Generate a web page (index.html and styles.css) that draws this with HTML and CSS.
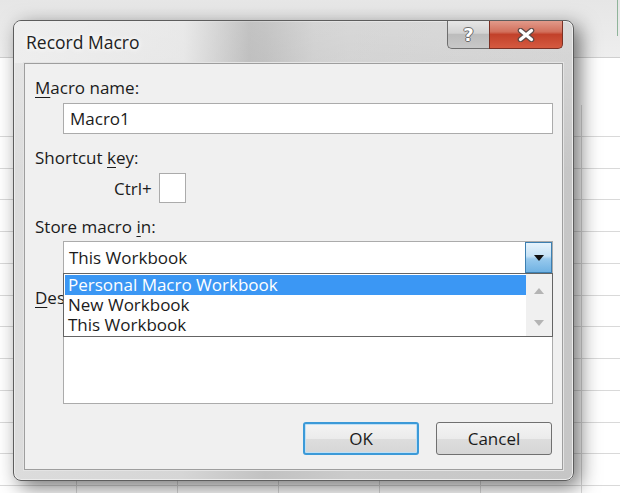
FILE: index.html
```html
<!DOCTYPE html>
<html lang="en">
<head>
  <meta charset="UTF-8" />
  <title>Record Macro</title>
  <link rel="stylesheet" href="styles.css">
</head>
<body>

  <!-- Record Macro dialog over the sheet -->
  <div class="window">
    <div class="titlebar">
      <span class="title">Record Macro</span>
      <div class="caption-buttons">
        <div class="cap help">?</div>
        <div class="cap close">
          <svg width="18" height="14" viewBox="0 0 18 14">
            <path d="M3.5 2.5 L14.5 11.5 M14.5 2.5 L3.5 11.5" stroke="#5e4a47" stroke-width="5.6" stroke-linecap="round" />
            <path d="M3.5 2.5 L14.5 11.5 M14.5 2.5 L3.5 11.5" stroke="#ffffff" stroke-width="3.2" stroke-linecap="round" />
          </svg>
        </div>
      </div>
    </div>

    <div class="client">
      <div class="label"><u>M</u>acro name:</div>
      <div class="field textbox">Macro1</div>

      <div class="label">Shortcut <u>k</u>ey:</div>
      <div class="shortcut-row">
        <span>Ctrl+</span>
        <div class="field keybox"></div>
      </div>

      <div class="label">Store macro <u>i</u>n:</div>
      <div class="combo-wrap">
        <div class="field combo">
          <span>This Workbook</span>
          <div class="combo-btn">
            <svg width="10" height="6" viewBox="0 0 10 6"><path d="M0 0 H10 L5 6 Z" fill="#111" /></svg>
          </div>
        </div>
        <div class="dropdown">
          <div class="options">
            <div class="option selected">Personal Macro Workbook</div>
            <div class="option">New Workbook</div>
            <div class="option">This Workbook</div>
          </div>
          <div class="scrollbar">
            <svg width="10" height="6" viewBox="0 0 10 6"><path d="M0 6 H10 L5 0 Z" fill="#b4b4b4" /></svg>
            <svg width="10" height="6" viewBox="0 0 10 6"><path d="M0 0 H10 L5 6 Z" fill="#b4b4b4" /></svg>
          </div>
        </div>
      </div>

      <!-- the open list hides most of this label -->
      <div class="label clipped"><u>D</u>escription:</div>
      <div class="field textarea"></div>

      <div class="button-row">
        <button class="button default-button">OK</button>
        <button class="button">Cancel</button>
      </div>
    </div>
  </div>

</body>
</html>
```

FILE: styles.css
```css
:root {
  --text: #1b1b1b;
  --field-border: #ababab;
  --client-bg: #f0f0f0;
  --grid: #d9d9d9;
  --highlight: #3b97f4;
}

body {
  margin: 0;
  width: 620px;
  height: 493px;
  overflow: hidden;
  font-family: 'Open Sans', 'Noto Sans', sans-serif;
  font-size: 17px;
  color: var(--text);
  background-color: #ffffff;
  background-image:
    linear-gradient(#8fb49a, #8fb49a),
    linear-gradient(#e6e6e6, #eeeeee),
    linear-gradient(#cfcfcf, #cfcfcf),
    linear-gradient(#ffffff, #ffffff),
    repeating-linear-gradient(to bottom, transparent 0 30.75px, var(--grid) 30.75px 31.75px),
    repeating-linear-gradient(to right, transparent 0 100px, var(--grid) 100px 101px);
  background-size:
    1px 36px,
    100% 57px,
    100% 1px,
    100% 47px,
    100% 100%,
    100% 100%;
  background-position:
    617px 0,
    0 0,
    0 57px,
    0 58px,
    0 10px,
    -24px 0;
  background-repeat: no-repeat;
}

.window {
  box-sizing: border-box;
  width: 561px;
  height: 461px;
  margin: 20px 0 0 13px;
  padding: 0 10px 10px 10px;
  border: 1px solid #5d5d5d;
  border-radius: 8px;
  background:
    linear-gradient(to bottom, rgba(255, 255, 255, 0.35), rgba(255, 255, 255, 0) 150px),
    linear-gradient(to right, #dcdcdc 0, #d6d6d6 30%, #c2c2c2 45%, #cbcbcb 60%, #c6c6c6 100%);
  box-shadow: 6px 6px 20px rgba(0, 0, 0, 0.55), inset 0 0 0 1px #ececec;
  display: flex;
  flex-direction: column;
}

.titlebar {
  height: 42px;
  display: flex;
  justify-content: space-between;
  align-items: flex-start;
  margin: 0 -10px;
  padding: 0 10px;
  border-radius: 7px 7px 0 0;
  background: linear-gradient(to right, rgba(240, 240, 240, 0.8) 0, rgba(236, 236, 236, 0.6) 170px, rgba(160, 160, 160, 0.4) 235px, rgba(190, 190, 190, 0.2) 300px, rgba(200, 200, 200, 0) 100%);
}

.title {
  margin: 10px 0 0 2px;
  font-size: 17.5px;
  line-height: 22px;
  color: #222222;
  text-shadow: 0 0 8px #ffffff, 0 0 4px #ffffff;
}

.caption-buttons {
  display: flex;
}

.cap {
  height: 28px;
  box-sizing: border-box;
  border: 1px solid #6e6e6e;
  border-top: none;
  display: flex;
  align-items: center;
  justify-content: center;
}

.help {
  width: 42px;
  border-right: none;
  border-radius: 0 0 0 5px;
  background: linear-gradient(to bottom, #e6e6e6 0, #d2d2d2 45%, #bcbcbc 50%, #c8c8c8 100%);
  font-family: 'DejaVu Sans', sans-serif;
  font-weight: bold;
  font-size: 18px;
  color: #ffffff;
  text-shadow: -1px 0 #6a6a6a, 1px 0 #6a6a6a, 0 -1px #6a6a6a, 0 1px #6a6a6a;
}

.close {
  width: 74px;
  border-color: #7a3024;
  border-radius: 0 0 5px 0;
  background: linear-gradient(to bottom, #e29a8a 0, #d2705c 40%, #c2412a 50%, #d55a40 100%);
}

.client {
  flex: 1;
  background: var(--client-bg);
  border: 1px solid #9e9e9e;
  box-shadow: 0 0 0 1px #e4e4e4;
  padding: 0 10px 0 10px;
  display: flex;
  flex-direction: column;
}

.label {
  line-height: 20px;
  margin-top: 14px;
}

.label u {
  text-decoration-thickness: 1px;
  text-underline-offset: 3px;
}

.label.clipped {
  width: 28px;
  overflow: hidden;
  white-space: nowrap;
}

.field {
  box-sizing: border-box;
  background: #ffffff;
  border: 1px solid var(--field-border);
}

.textbox {
  margin: 5px 0 0 28px;
  width: 490px;
  height: 31px;
  padding: 0 6px;
  line-height: 29px;
}

.shortcut-row {
  display: flex;
  align-items: center;
  gap: 7px;
  margin: 5px 0 0 79px;
}

.keybox {
  width: 27px;
  height: 30px;
}

.combo-wrap {
  position: relative;
  margin: 4px 0 0 28px;
  width: 490px;
}

.combo {
  height: 33px;
  display: flex;
  align-items: center;
  justify-content: space-between;
  padding-left: 5px;
}

.combo-btn {
  box-sizing: border-box;
  width: 27px;
  height: 31px;
  border: 1px solid #3c7fb1;
  background: linear-gradient(to bottom, #e6f3fc 0, #c6e2f6 45%, #97c9ed 55%, #70b2e3 100%);
  display: flex;
  align-items: center;
  justify-content: center;
}

.dropdown {
  position: absolute;
  top: 32px;
  left: 0;
  right: 0;
  box-sizing: border-box;
  height: 64px;
  background: #ffffff;
  border: 1px solid #646464;
  display: flex;
  z-index: 5;
}

.options {
  flex: 1;
  padding: 1px 0 0 1px;
}

.option {
  height: 20px;
  line-height: 20px;
  padding-left: 3px;
  white-space: nowrap;
}

.option.selected {
  background: var(--highlight);
  color: #ffffff;
}

.scrollbar {
  width: 26px;
  background: #f0f0f0;
  display: flex;
  flex-direction: column;
  align-items: center;
  justify-content: space-between;
  padding: 14px 0 10px;
  box-sizing: border-box;
}

.textarea {
  margin: 4px 0 0 28px;
  width: 490px;
  height: 92px;
}

.button-row {
  display: flex;
  justify-content: flex-end;
  gap: 17px;
  margin: 18px 0 0 0;
}

.button {
  box-sizing: border-box;
  width: 116px;
  height: 33px;
  font-family: inherit;
  font-size: 17px;
  color: var(--text);
  border: 1px solid #707070;
  border-radius: 3px;
  background: linear-gradient(to bottom, #f4f4f4 0, #ebebeb 50%, #dddddd 51%, #d6d6d6 100%);
  padding: 0;
}

.default-button {
  border: 2px solid #3c9ad8;
  box-shadow: inset 0 0 0 1px #bfe0f5;
}
```
